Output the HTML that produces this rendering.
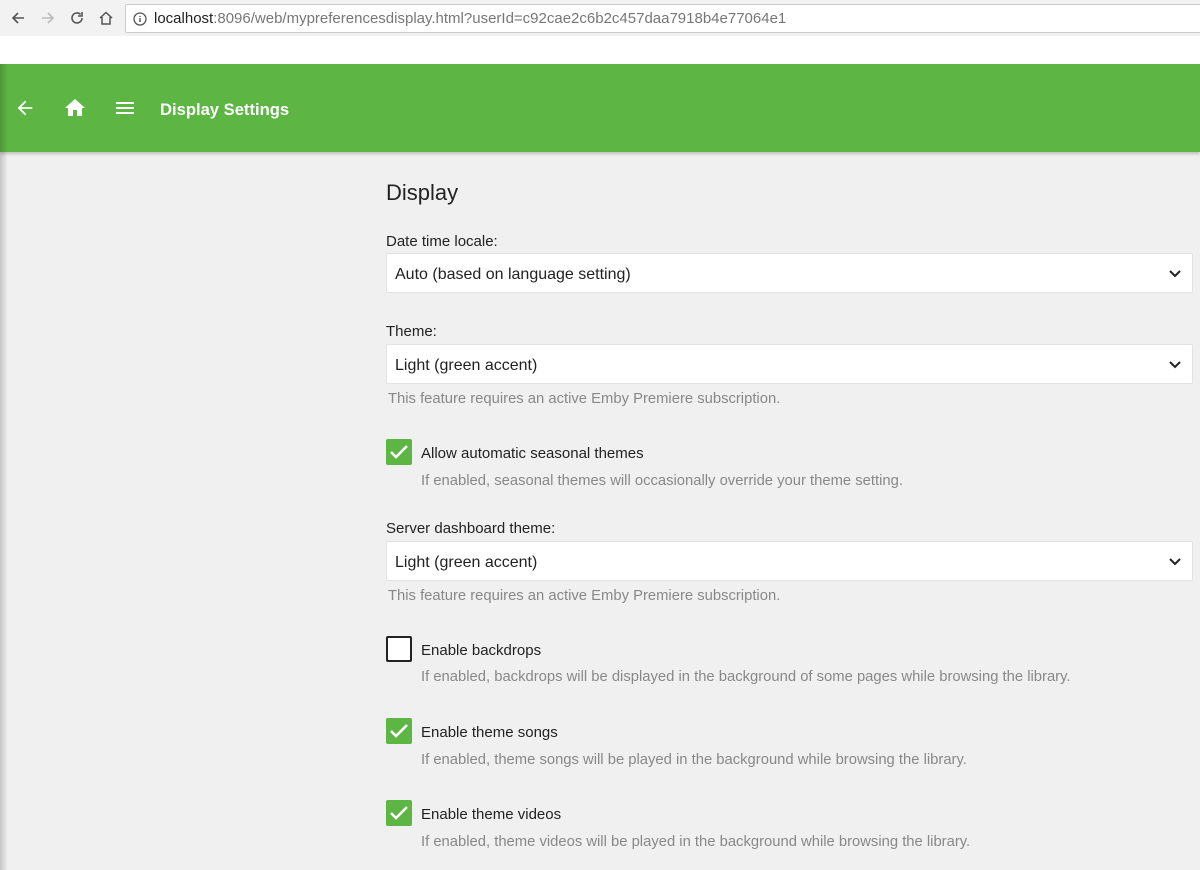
<!DOCTYPE html>
<html><head><style>
*{box-sizing:border-box;margin:0;padding:0}
body{width:1200px;height:870px;overflow:hidden;background:#f0f0f0;font-family:"Segoe UI","Liberation Sans",sans-serif;position:relative}
.chrome{position:absolute;left:0;top:0;width:1200px;height:36px;background:#f2f2f2}
.url{position:absolute;left:125px;top:4px;width:1080px;height:29px;background:#fff;border:1px solid #ccc;border-radius:2px;font-size:15px;line-height:27px;padding-left:28px;color:#777}
.url b{font-weight:normal;color:#222}
.white{position:absolute;top:36px;left:0;width:1200px;height:28px;background:#fff}
.hdr{position:absolute;top:64px;left:0;width:1200px;height:88px;background:#5db544;box-shadow:0 2px 3px rgba(0,0,0,.2)}
.hdr .t{position:absolute;left:160px;top:35px;color:#fff;font-size:16.6px;font-weight:bold;line-height:22px}
.shadow{position:absolute;left:0;top:64px;width:8px;height:806px;background:linear-gradient(to right,rgba(0,0,0,.18),rgba(0,0,0,0))}
.abs{position:absolute}
h1{position:absolute;left:386px;top:180px;font-size:22px;font-weight:normal;color:#222}
.lbl{position:absolute;left:386px;font-size:15px;color:#222}
.sel{position:absolute;left:386px;width:807px;height:40px;background:#fff;border:1px solid #e2e2e2;border-radius:2px;font-size:16px;color:#222;line-height:41px;padding-left:8px}
.sel svg{position:absolute;right:10px;top:13px}
.note{position:absolute;left:388px;font-size:14.8px;color:#888}
.cb{position:absolute;left:386px;width:26px;height:26px;border-radius:2px;background:#5db544}
.cb.off{background:#fff;border:2px solid #222}
.cbl{position:absolute;left:421px;font-size:15px;color:#222}
.cbn{position:absolute;left:421px;font-size:14.8px;color:#888}
</style></head><body>
<div class="chrome">
<svg class="abs" style="left:10px;top:10px" width="16" height="16" viewBox="0 0 16 16"><path d="M14 8H3M8 3L3 8l5 5" stroke="#555" stroke-width="1.6" fill="none"/></svg>
<svg class="abs" style="left:40px;top:10px" width="16" height="16" viewBox="0 0 16 16"><path d="M2 8h11M8 3l5 5-5 5" stroke="#bbb" stroke-width="1.6" fill="none"/></svg>
<svg class="abs" style="left:69px;top:10px" width="16" height="16" viewBox="0 0 16 16"><path d="M13 8a5 5 0 1 1-1.5-3.6M13 2v4h-4" stroke="#555" stroke-width="1.6" fill="none"/></svg>
<svg class="abs" style="left:98px;top:10px" width="16" height="16" viewBox="0 0 16 16"><path d="M2 8l6-5.5L14 8M4 7v7h8V7" stroke="#555" stroke-width="1.5" fill="none"/></svg>
<div class="url"><svg class="abs" style="left:7px;top:7px" width="14" height="14" viewBox="0 0 14 14"><circle cx="7" cy="7" r="6" stroke="#555" stroke-width="1.3" fill="none"/><path d="M7 6v4M7 4v1" stroke="#555" stroke-width="1.4"/></svg><b>localhost</b>:8096/web/mypreferencesdisplay.html?userId=c92cae2c6b2c457daa7918b4e77064e1</div>
</div>
<div class="white"></div>
<div class="hdr">
<svg class="abs" style="left:14px;top:33px" width="22" height="22" viewBox="0 0 24 24"><path d="M20 11H7.8l5.6-5.6L12 4l-8 8 8 8 1.4-1.4L7.8 13H20z" fill="#fff"/></svg>
<svg class="abs" style="left:63px;top:32px" width="24" height="24" viewBox="0 0 24 24"><path d="M10 20v-6h4v6h5v-8h3L12 3 2 12h3v8z" fill="#fff"/></svg>
<svg class="abs" style="left:113px;top:32px" width="24" height="24" viewBox="0 0 24 24"><path d="M3 18h18v-2H3zm0-5h18v-2H3zm0-7v2h18V6z" fill="#fff"/></svg>
<div class="t">Display Settings</div>
</div>
<div class="shadow"></div>
<h1>Display</h1>
<div class="lbl" style="top:233px">Date time locale:</div>
<div class="sel" style="top:253px">Auto (based on language setting)<svg width="14" height="14" viewBox="0 0 14 14"><path d="M2 4l5 5 5-5" stroke="#222" stroke-width="2" fill="none"/></svg></div>
<div class="lbl" style="top:323px">Theme:</div>
<div class="sel" style="top:344px">Light (green accent)<svg width="14" height="14" viewBox="0 0 14 14"><path d="M2 4l5 5 5-5" stroke="#222" stroke-width="2" fill="none"/></svg></div>
<div class="note" style="top:391px">This feature requires an active Emby Premiere subscription.</div>
<div class="cb" style="top:439px"><svg width="26" height="26" viewBox="0 0 26 26"><path d="M5 13l5 5 11-11" stroke="#fff" stroke-width="2.6" fill="none"/></svg></div>
<div class="cbl" style="top:445px">Allow automatic seasonal themes</div>
<div class="cbn" style="top:473px">If enabled, seasonal themes will occasionally override your theme setting.</div>
<div class="lbl" style="top:520px">Server dashboard theme:</div>
<div class="sel" style="top:541px">Light (green accent)<svg width="14" height="14" viewBox="0 0 14 14"><path d="M2 4l5 5 5-5" stroke="#222" stroke-width="2" fill="none"/></svg></div>
<div class="note" style="top:588px">This feature requires an active Emby Premiere subscription.</div>
<div class="cb off" style="top:636px"></div>
<div class="cbl" style="top:642px">Enable backdrops</div>
<div class="cbn" style="top:669px">If enabled, backdrops will be displayed in the background of some pages while browsing the library.</div>
<div class="cb" style="top:718px"><svg width="26" height="26" viewBox="0 0 26 26"><path d="M5 13l5 5 11-11" stroke="#fff" stroke-width="2.6" fill="none"/></svg></div>
<div class="cbl" style="top:724px">Enable theme songs</div>
<div class="cbn" style="top:752px">If enabled, theme songs will be played in the background while browsing the library.</div>
<div class="cb" style="top:800px"><svg width="26" height="26" viewBox="0 0 26 26"><path d="M5 13l5 5 11-11" stroke="#fff" stroke-width="2.6" fill="none"/></svg></div>
<div class="cbl" style="top:806px">Enable theme videos</div>
<div class="cbn" style="top:834px">If enabled, theme videos will be played in the background while browsing the library.</div>
</body></html>
